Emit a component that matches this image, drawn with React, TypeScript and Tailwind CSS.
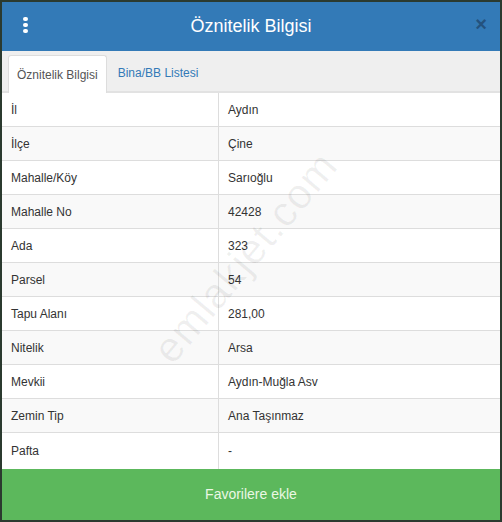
import React from "react"

const rows: [string, string][] = [
  ["İl", "Aydın"],
  ["İlçe", "Çine"],
  ["Mahalle/Köy", "Sarıoğlu"],
  ["Mahalle No", "42428"],
  ["Ada", "323"],
  ["Parsel", "54"],
  ["Tapu Alanı", "281,00"],
  ["Nitelik", "Arsa"],
  ["Mevkii", "Aydın-Muğla Asv"],
  ["Zemin Tip", "Ana Taşınmaz"],
  ["Pafta", "-"],
]

export default function App() {
  return (
    <div className="w-[502px] h-[522px] bg-[#2b3a2f] p-[2px] font-['Liberation_Sans',Arial,sans-serif]">
      <div className="relative flex h-full flex-col overflow-hidden bg-white">
        {/* header */}
        <div className="relative flex h-[49px] shrink-0 items-center justify-center bg-[#337ab7]">
          <div className="absolute left-[21px] top-[15px] flex flex-col gap-[2px]">
            <span className="block h-[4px] w-[5px] rounded-full bg-white" />
            <span className="block h-[4px] w-[5px] rounded-full bg-white" />
            <span className="block h-[4px] w-[5px] rounded-full bg-white" />
          </div>
          <h1 className="text-[18px] text-white">Öznitelik Bilgisi</h1>
          <span className="absolute right-[13px] top-[12px] text-[20px] font-bold leading-none text-[#24527e]">×</span>
        </div>

        {/* tabs */}
        <div className="flex h-[42px] shrink-0 items-end border-b-2 border-[#e2e2e2] bg-[#efefef] pl-[6px]">
          <div className="-mb-[2px] flex h-[38px] items-center rounded-t-[3px] border border-b-0 border-[#ddd] bg-white px-[8px] text-[12px] text-[#555]">
            Öznitelik Bilgisi
          </div>
          <div className="flex h-[37px] items-center px-[11px] text-[12px] text-[#337ab7]">Bina/BB Listesi</div>
        </div>

        {/* table */}
        <div className="flex flex-1 flex-col">
          {rows.map(([k, v], i) => (
            <div
              key={k}
              className={`flex h-[34px] shrink-0 border-b border-[#ddd] text-[12px] text-[#333] ${i % 2 === 1 ? "bg-[#f9f9f9]" : "bg-white"} last:flex-1 last:border-b-0`}
            >
              <div className="flex w-[217px] items-center border-r border-[#ddd] pl-[9px]">{k}</div>
              <div className="flex flex-1 items-center pl-[9px]">{v}</div>
            </div>
          ))}
        </div>

        {/* watermark */}
        <div className="pointer-events-none absolute left-[243px] top-[255px] -translate-x-1/2 -translate-y-1/2 -rotate-[50deg] text-[42px] tracking-wide text-[rgba(0,0,0,0.06)]">
          emlakjet.com
        </div>

        <button className="flex h-[51px] shrink-0 items-center justify-center bg-[#5cb85c] text-[14px] text-[#eaf7e4]">
          Favorilere ekle
        </button>
      </div>
    </div>
  )
}
